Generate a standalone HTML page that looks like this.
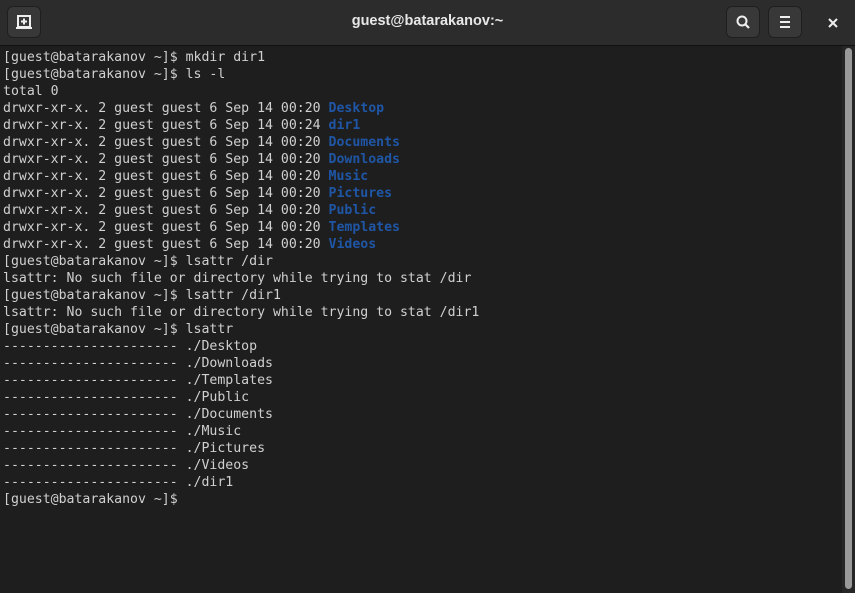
<!DOCTYPE html>
<html><head><style>
body{margin:0;width:855px;height:593px;background:#1e1e1e;overflow:hidden;font-family:"Liberation Sans",sans-serif}
.hdr{position:absolute;left:0;top:0;width:855px;height:45px;background:#2c2c2c;border-bottom:1px solid #111}
.btn{position:absolute;top:6px;width:34px;height:32px;background:#383838;border-radius:6px;border:1px solid #1f1f1f;box-sizing:border-box}
.title{position:absolute;top:13px;left:0;width:855px;text-align:center;color:#e8e8e8;font-weight:bold;font-size:14.5px}
pre{position:absolute;left:3px;top:49px;margin:0;font-family:"DejaVu Sans Mono","Liberation Mono",monospace;font-size:13.2px;line-height:17px;color:#d0d0d0}
b{color:#1f56a6}
.track{position:absolute;left:842px;top:46px;width:13px;height:547px;background:#262626}
.thumb{position:absolute;left:845px;top:48px;width:7px;height:541px;background:#9a9a9a;border-radius:4px}
</style></head><body>
<div class="hdr">
<div class="btn" style="left:7px"><svg width="32" height="30" viewBox="0 0 32 30"><rect x="10" y="9" width="12" height="11" fill="none" stroke="#eee" stroke-width="2"/><path d="M8 21h16M16 11.5v6M13 14.5h6" stroke="#eee" stroke-width="2"/></svg></div>
<div class="title">guest@batarakanov:~</div>
<div class="btn" style="left:726px"><svg width="32" height="30" viewBox="0 0 32 30"><circle cx="15" cy="14" r="4.5" fill="none" stroke="#eee" stroke-width="2"/><path d="M18 17l4 4" stroke="#eee" stroke-width="2.2"/></svg></div>
<div class="btn" style="left:768px"><svg width="32" height="30" viewBox="0 0 32 30"><path d="M11 10h10M11 15h10M11 20h10" stroke="#eee" stroke-width="2"/></svg></div>
<svg style="position:absolute;left:825px;top:15px" width="16" height="16" viewBox="0 0 16 16"><path d="M4 4l8 8M12 4l-8 8" stroke="#eee" stroke-width="2"/></svg>
</div>
<pre>[guest@batarakanov ~]$ mkdir dir1
[guest@batarakanov ~]$ ls -l
total 0
drwxr-xr-x. 2 guest guest 6 Sep 14 00:20 <b>Desktop</b>
drwxr-xr-x. 2 guest guest 6 Sep 14 00:24 <b>dir1</b>
drwxr-xr-x. 2 guest guest 6 Sep 14 00:20 <b>Documents</b>
drwxr-xr-x. 2 guest guest 6 Sep 14 00:20 <b>Downloads</b>
drwxr-xr-x. 2 guest guest 6 Sep 14 00:20 <b>Music</b>
drwxr-xr-x. 2 guest guest 6 Sep 14 00:20 <b>Pictures</b>
drwxr-xr-x. 2 guest guest 6 Sep 14 00:20 <b>Public</b>
drwxr-xr-x. 2 guest guest 6 Sep 14 00:20 <b>Templates</b>
drwxr-xr-x. 2 guest guest 6 Sep 14 00:20 <b>Videos</b>
[guest@batarakanov ~]$ lsattr /dir
lsattr: No such file or directory while trying to stat /dir
[guest@batarakanov ~]$ lsattr /dir1
lsattr: No such file or directory while trying to stat /dir1
[guest@batarakanov ~]$ lsattr
---------------------- ./Desktop
---------------------- ./Downloads
---------------------- ./Templates
---------------------- ./Public
---------------------- ./Documents
---------------------- ./Music
---------------------- ./Pictures
---------------------- ./Videos
---------------------- ./dir1
[guest@batarakanov ~]$ </pre>
<div class="track"></div><div class="thumb"></div>
</body></html>
